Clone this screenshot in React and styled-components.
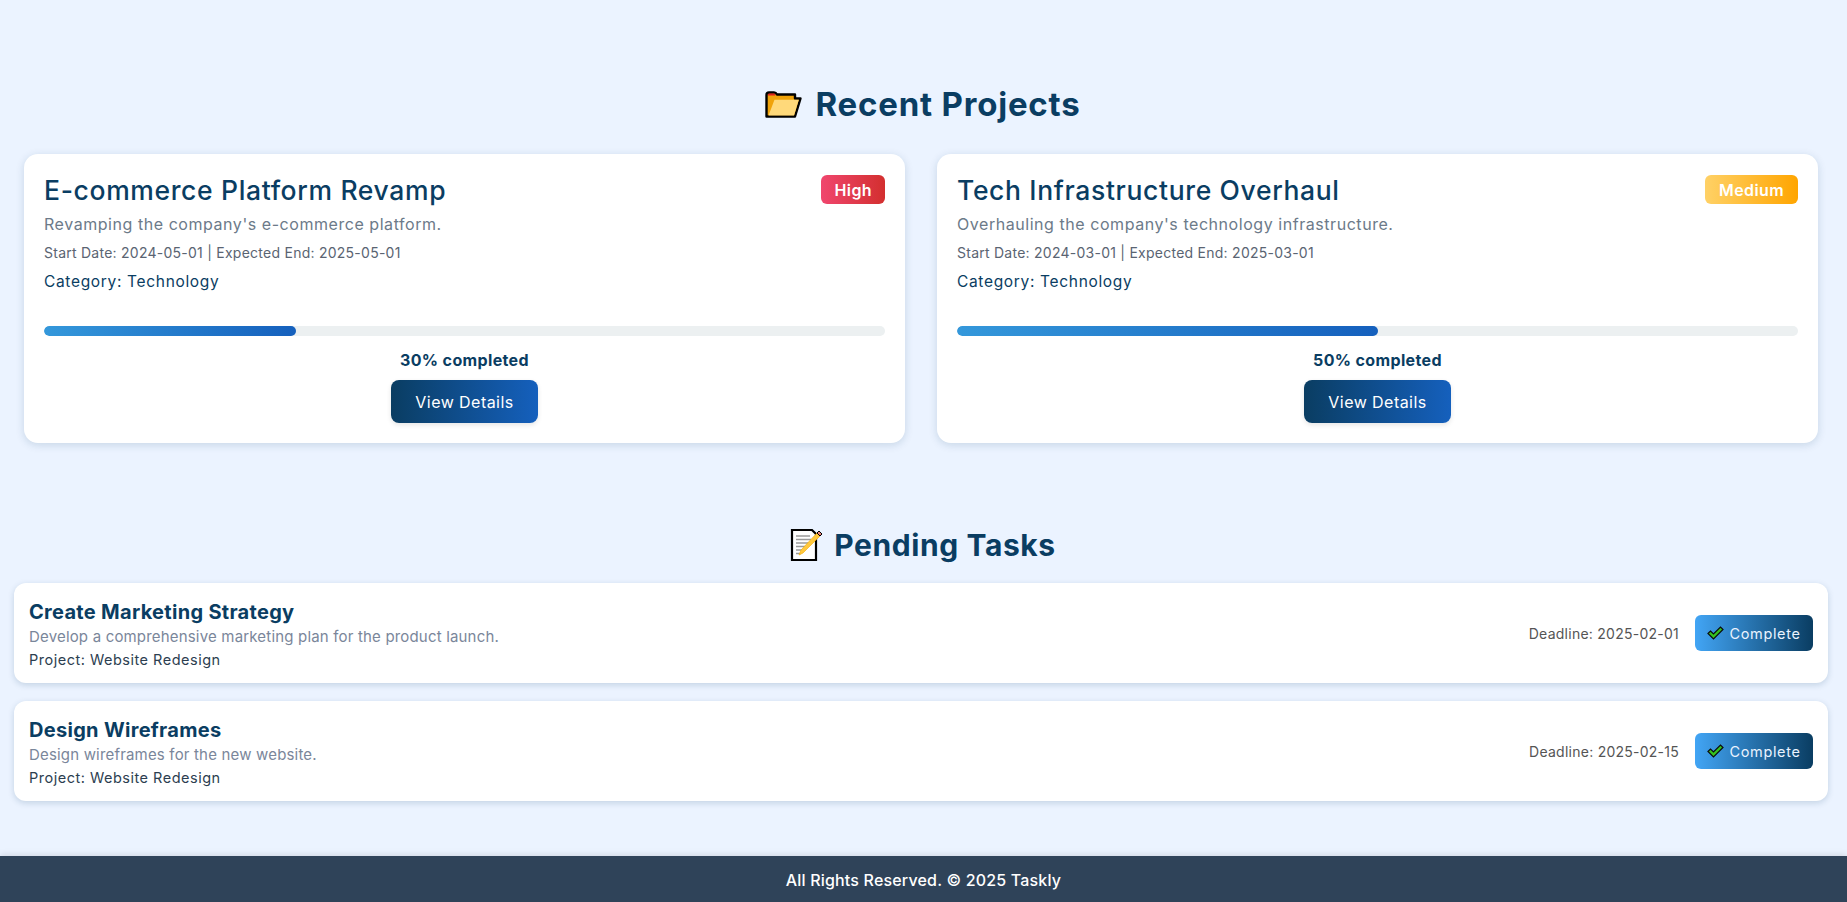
import React from "react";
import styled, { createGlobalStyle } from "styled-components";

const Global = createGlobalStyle`
  * { box-sizing: border-box; }
  html, body { margin: 0; padding: 0; }
  body { background: #ebf3ff; font-family: Inter, "Open Sans", "Liberation Sans", sans-serif; }
`;
const Page = styled.div`
  min-height: 902px; display: flex; flex-direction: column; background: #ebf3ff;
`;
const Main = styled.main`
  flex: 1; display: flex; flex-direction: column;
`;
const ProjectsSection = styled.section`
  padding: 84px 29px 0 24px;
`;
const TasksSection = styled.section`
  padding: 0 19px 0 14px; margin-top: 82px;
`;
const Heading = styled.h2`
  margin: 0; padding-left: 4px; display: flex; justify-content: center; align-items: center; gap: ${p => p.$gap}px;
  font-size: ${p => p.$size}px; line-height: 40px; font-weight: 700; color: #0a3d62;
  letter-spacing: ${p => p.$spacing}px;
`;
const ProjectGrid = styled.div`
  display: grid; grid-template-columns: 1fr 1fr; gap: 32px; margin-top: 30px;
`;
const ProjectCard = styled.article`
  background: #fff; border-radius: 14px; padding: 21px 20px 20px;
  box-shadow: 0 2px 8px rgba(10, 61, 98, 0.16);
  height: 289px; display: flex; flex-direction: column;
`;
const CardHead = styled.div`
  display: flex; justify-content: space-between; align-items: flex-start;
`;
const ProjectTitle = styled.h3`
  margin: 0; font-size: 26.5px; line-height: 30px; font-weight: 500; color: #0a3d62; letter-spacing: 0.65px;
`;
const Badge = styled.span`
  height: 29px; padding: 0 ${p => p.$level === "High" ? 13 : 14}px; border-radius: 6px; display: flex; align-items: center;
  color: #fff; font-size: 16px; font-weight: 600; letter-spacing: 0.4px;
  background: ${p => p.$level === "High" ? "linear-gradient(90deg,#f0466e,#d32f2f)" : "linear-gradient(90deg,#ffd166,#ffa500)"};
`;
const ProjectDesc = styled.p`
  margin: 9px 0 0; font-size: 16px; line-height: 20px; color: #6c7a89; letter-spacing: 0.55px;
`;
const ProjectDates = styled.p`
  margin: 10px 0 0; font-size: 14px; line-height: 18px; color: #5a6472; letter-spacing: 0.25px;
`;
const ProjectCategory = styled.p`
  margin: 10px 0 0; font-size: 15.5px; line-height: 20px; color: #0a3d62; letter-spacing: 0.67px;
`;
const Track = styled.div`
  margin-top: 34px; height: 10px; border-radius: 5px; background: #ecf0f1; overflow: hidden;
`;
const Fill = styled.div`
  height: 100%; border-radius: 5px; background: linear-gradient(90deg, #3498db, #1560bd);
`;
const Percent = styled.p`
  margin: 14px 0 0; text-align: center; font-size: 16px; line-height: 20px; font-weight: 700; color: #0a3d62; letter-spacing: 0.36px;
`;
const DetailsButton = styled.button`
  align-self: center; margin-top: 10px; width: 147px; height: 43px; border: 0; border-radius: 8px;
  background: linear-gradient(90deg, #0a3d62, #1560bd); color: #fff; font: inherit; font-size: 16px;
  letter-spacing: 0.45px; box-shadow: 0 2px 5px rgba(0,0,0,0.1);
`;
const TaskList = styled.div`
  display: flex; flex-direction: column; gap: 18px; margin-top: 18px;
`;
const TaskCard = styled.article`
  height: 100px; background: #fff; border-radius: 12px; padding: 0 15px;
  box-shadow: 0 2px 6px rgba(10, 61, 98, 0.18);
  display: flex; justify-content: space-between; align-items: center;
`;
const TaskInfo = styled.div`
  display: flex; flex-direction: column; padding-top: 3px;
`;
const TaskTitle = styled.h4`
  margin: 0; font-size: 20px; line-height: 24px; font-weight: 700; color: #0a3d62; letter-spacing: 0.3px;
`;
const TaskDesc = styled.p`
  margin: 3px 0 0; font-size: 15px; line-height: 19px; color: #7a869a; letter-spacing: 0.18px;
`;
const TaskProject = styled.p`
  margin: 4px 0 0; font-size: 14.5px; line-height: 19px; color: #2c3e50; letter-spacing: 0.5px;
`;
const TaskActions = styled.div`
  display: flex; align-items: center; gap: 16px;
`;
const Deadline = styled.span`
  font-size: 14px; color: #555; letter-spacing: 0.25px;
`;
const CompleteButton = styled.button`
  width: 118px; height: 36px; border: 0; border-radius: 6px; padding: 0;
  display: flex; align-items: center; justify-content: center; gap: 5px;
  background: linear-gradient(90deg, #42a5f5, #0a3d62); color: #eaf3ff; font: inherit; font-size: 14.5px; letter-spacing: 0.64px;
`;
const Footer = styled.footer`
  height: 46px; padding-top: 2px; background: #2f4359; color: #fff; display: flex; align-items: center; justify-content: center;
  font-size: 16px; font-weight: 500; letter-spacing: 0.18px; box-shadow: 0 -2px 6px rgba(0,0,0,0.1);
`;

const FolderIcon = () => (
  <svg width="37" height="27" viewBox="0 0 37 27">
    <path d="M1.5 4 Q1.5 1.5 4 1.5 H9 Q11 1.5 12 3.5 H30 V7.5 H35.5 L30 25.5 H1.5 Z" fill="#f0a30a" stroke="#000" strokeWidth="2.4" strokeLinejoin="round" />
    <path d="M3 3.5 Q3 2.6 5 2.6 H9.5 L10.5 4.5 H3 Z" fill="#e02020" />
    <path d="M3.5 24.5 L9.5 8.8 H33.8 L29 24.5 Z" fill="#ffd97a" />
  </svg>
);
const MemoIcon = () => (
  <svg width="34" height="34" viewBox="0 0 34 34">
    <path d="M2 2 H22 L26 6 V32 H2 Z" fill="#fff" stroke="#000" strokeWidth="2.2" />
    <path d="M6 8 H20 M6 11.5 H21 M6 15 H19 M6 18.5 H16 M6 22 H13 M6 25.5 H11" stroke="#9a9a9a" strokeWidth="1.3" />
    <path d="M9 27 L11 22 L27 5 L30 8 L13 25 Z" fill="#ffc83d" stroke="#f2a900" strokeWidth="0.6" />
    <path d="M27 5 L29 3 L32 6 L30 8 Z" fill="#e9867c" stroke="#000" strokeWidth="1" />
  </svg>
);
const CheckIcon = () => (
  <svg width="17" height="14" viewBox="0 0 17 14">
    <path d="M1 7.5 L3.5 5 L6.5 8 L13.5 1 L16 3.5 L6.5 13 Z" fill="#35c21e" stroke="#0b0b0b" strokeWidth="1.2" strokeLinejoin="miter" />
  </svg>
);

const projects = [
  { title: "E-commerce Platform Revamp", level: "High", desc: "Revamping the company's e-commerce platform.", start: "2024-05-01", end: "2025-05-01", pct: 30 },
  { title: "Tech Infrastructure Overhaul", level: "Medium", desc: "Overhauling the company's technology infrastructure.", start: "2024-03-01", end: "2025-03-01", pct: 50 },
];
const tasks = [
  { title: "Create Marketing Strategy", desc: "Develop a comprehensive marketing plan for the product launch.", deadline: "2025-02-01" },
  { title: "Design Wireframes", desc: "Design wireframes for the new website.", deadline: "2025-02-15" },
];

export default function App() {
  return (
    <Page>
      <Global />
      <Main>
        <ProjectsSection>
          <Heading $size={33} $spacing={0.8} $gap={13}><FolderIcon />Recent Projects</Heading>
          <ProjectGrid>
            {projects.map(p => (
              <ProjectCard key={p.title}>
                <CardHead>
                  <ProjectTitle>{p.title}</ProjectTitle>
                  <Badge $level={p.level}>{p.level}</Badge>
                </CardHead>
                <ProjectDesc>{p.desc}</ProjectDesc>
                <ProjectDates>Start Date: {p.start} | Expected End: {p.end}</ProjectDates>
                <ProjectCategory>Category: Technology</ProjectCategory>
                <Track><Fill style={{ width: `${p.pct}%` }} /></Track>
                <Percent>{p.pct}% completed</Percent>
                <DetailsButton>View Details</DetailsButton>
              </ProjectCard>
            ))}
          </ProjectGrid>
        </ProjectsSection>
        <TasksSection>
          <Heading $size={30} $spacing={0.6} $gap={10}><MemoIcon />Pending Tasks</Heading>
          <TaskList>
            {tasks.map(t => (
              <TaskCard key={t.title}>
                <TaskInfo>
                  <TaskTitle>{t.title}</TaskTitle>
                  <TaskDesc>{t.desc}</TaskDesc>
                  <TaskProject>Project: Website Redesign</TaskProject>
                </TaskInfo>
                <TaskActions>
                  <Deadline>Deadline: {t.deadline}</Deadline>
                  <CompleteButton><CheckIcon />Complete</CompleteButton>
                </TaskActions>
              </TaskCard>
            ))}
          </TaskList>
        </TasksSection>
      </Main>
      <Footer>All Rights Reserved. © 2025 Taskly</Footer>
    </Page>
  );
}
